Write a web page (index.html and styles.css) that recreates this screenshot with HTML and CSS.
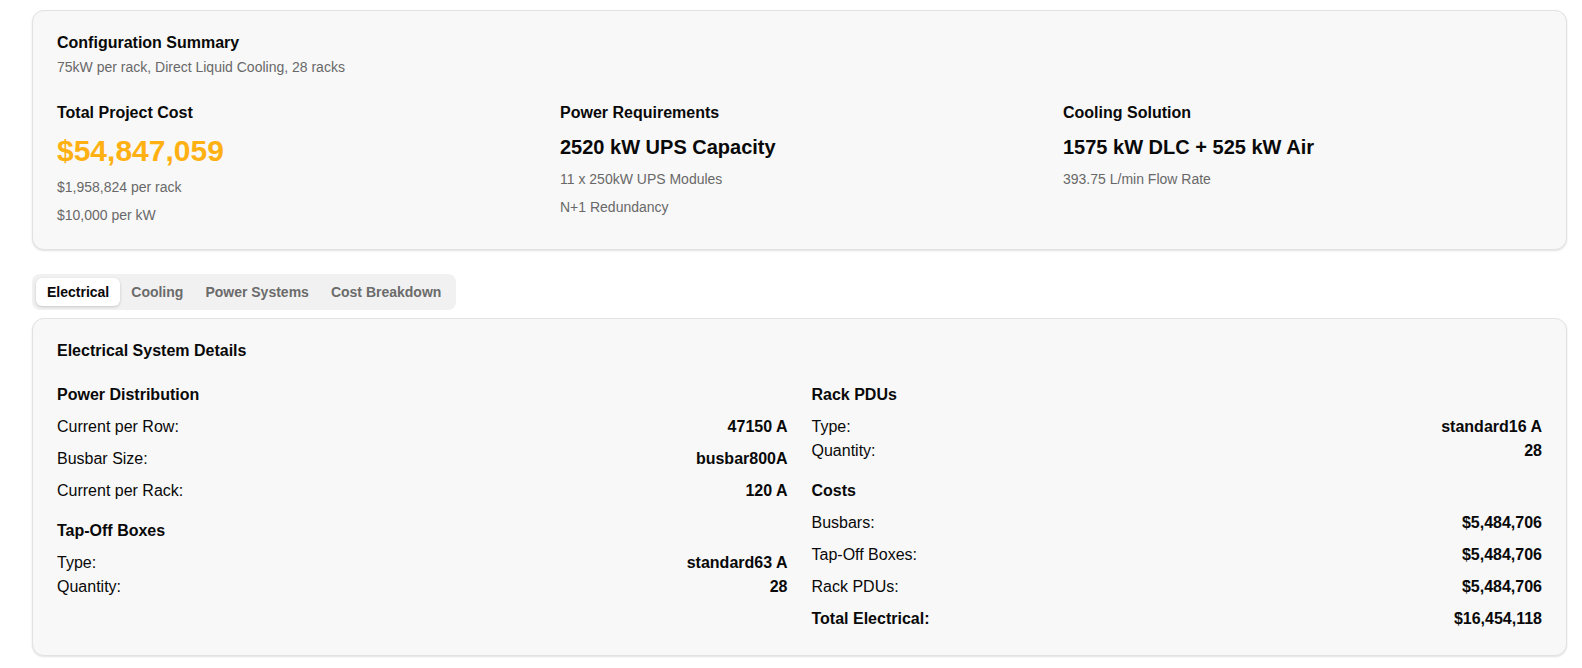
FILE: index.html
```html
<!DOCTYPE html>
<html lang="en">
<head>
  <meta charset="utf-8">
  <meta name="viewport" content="width=device-width, initial-scale=1">
  <title>Configuration Summary</title>
  <link rel="stylesheet" href="styles.css">
</head>
<body>
  <main class="page">
    <section class="card summary">
      <header class="card-header">
        <h2 class="card-title">Configuration Summary</h2>
        <p class="muted">75kW per rack, Direct Liquid Cooling, 28 racks</p>
      </header>
      <div class="summary-grid">
        <div class="stack">
          <h3 class="heading">Total Project Cost</h3>
          <p class="cost">$54,847,059</p>
          <p class="muted">$1,958,824 per rack</p>
          <p class="muted">$10,000 per kW</p>
        </div>
        <div class="stack">
          <h3 class="heading">Power Requirements</h3>
          <p class="figure">2520 kW UPS Capacity</p>
          <p class="muted">11 x 250kW UPS Modules</p>
          <p class="muted">N+1 Redundancy</p>
        </div>
        <div class="stack">
          <h3 class="heading">Cooling Solution</h3>
          <p class="figure">1575 kW DLC + 525 kW Air</p>
          <p class="muted">393.75 L/min Flow Rate</p>
        </div>
      </div>
    </section>

    <div class="tab-list" role="tablist" aria-label="System details">
      <button class="tab tab-active" id="tab-electrical" type="button" role="tab" aria-selected="true" aria-controls="panel-electrical">Electrical</button>
      <button class="tab" type="button" role="tab" aria-selected="false">Cooling</button>
      <button class="tab" type="button" role="tab" aria-selected="false">Power Systems</button>
      <button class="tab" type="button" role="tab" aria-selected="false">Cost Breakdown</button>
    </div>

    <section class="card" id="panel-electrical" role="tabpanel" aria-labelledby="tab-electrical">
      <header class="card-header">
        <h2 class="card-title">Electrical System Details</h2>
      </header>
      <div class="detail-grid">
        <div class="detail-column">
          <div class="stack">
            <h3 class="heading">Power Distribution</h3>
            <dl class="rows rows-spaced">
              <div class="row"><dt>Current per Row:</dt><dd>47150 A</dd></div>
              <div class="row"><dt>Busbar Size:</dt><dd>busbar800A</dd></div>
              <div class="row"><dt>Current per Rack:</dt><dd>120 A</dd></div>
            </dl>
          </div>
          <div class="stack">
            <h3 class="heading">Tap-Off Boxes</h3>
            <dl class="rows">
              <div class="row"><dt>Type:</dt><dd>standard63 A</dd></div>
              <div class="row"><dt>Quantity:</dt><dd>28</dd></div>
            </dl>
          </div>
        </div>
        <div class="detail-column">
          <div class="stack">
            <h3 class="heading">Rack PDUs</h3>
            <dl class="rows">
              <div class="row"><dt>Type:</dt><dd>standard16 A</dd></div>
              <div class="row"><dt>Quantity:</dt><dd>28</dd></div>
            </dl>
          </div>
          <div class="stack">
            <h3 class="heading">Costs</h3>
            <dl class="rows rows-spaced">
              <div class="row"><dt>Busbars:</dt><dd>$5,484,706</dd></div>
              <div class="row"><dt>Tap-Off Boxes:</dt><dd>$5,484,706</dd></div>
              <div class="row"><dt>Rack PDUs:</dt><dd>$5,484,706</dd></div>
              <div class="row row-total"><dt>Total Electrical:</dt><dd>$16,454,118</dd></div>
            </dl>
          </div>
        </div>
      </div>
    </section>
  </main>
</body>
</html>
```

FILE: styles.css
```css
* {
  box-sizing: border-box;
}

body {
  margin: 0;
  background: #ffffff;
  color: #090909;
  font-family: "Liberation Sans", Arial, sans-serif;
  font-size: 16px;
  line-height: 24px;
}

h2,
h3,
p,
dl,
dd {
  margin: 0;
}

.page {
  padding: 10px 15px 10px 32px;
}

.card {
  padding: 24px;
  border: 1px solid #e2e2e2;
  border-radius: 12px;
  background: #f8f8f8;
  box-shadow: 0 1px 2px rgba(0, 0, 0, 0.12);
}

.card-header {
  display: flex;
  flex-direction: column;
  gap: 6px;
  margin-bottom: 24px;
}

.card-title {
  font-size: 16px;
  font-weight: 700;
  line-height: 16px;
}

.muted {
  color: #686868;
  font-size: 14px;
  line-height: 20px;
}

.summary-grid {
  display: grid;
  grid-template-columns: repeat(3, 1fr);
  gap: 24px;
}

.stack {
  display: flex;
  flex-direction: column;
  gap: 8px;
}

.heading {
  font-size: 16px;
  font-weight: 700;
}

.cost {
  color: #ffb114;
  font-size: 30px;
  font-weight: 700;
  line-height: 36px;
}

.figure {
  font-size: 20px;
  font-weight: 700;
  line-height: 28px;
}

.tab-list {
  display: inline-flex;
  margin: 24px 0 8px;
  padding: 4px;
  border-radius: 8px;
  background: #f1f1f1;
  vertical-align: top;
}

.tab {
  padding: 4px 11px;
  border: 0;
  border-radius: 6px;
  background: transparent;
  color: #6b6b6b;
  font: inherit;
  font-size: 14px;
  font-weight: 700;
  line-height: 20px;
  cursor: pointer;
}

.tab-active {
  background: #ffffff;
  color: #090909;
  box-shadow: 0 1px 3px rgba(0, 0, 0, 0.18);
}

.detail-grid {
  display: grid;
  grid-template-columns: repeat(2, 1fr);
  gap: 24px;
}

.detail-column {
  display: flex;
  flex-direction: column;
  gap: 16px;
}

.rows {
  display: flex;
  flex-direction: column;
}

.rows-spaced {
  gap: 8px;
}

.row {
  display: flex;
  justify-content: space-between;
}

.row dd,
.row-total {
  font-weight: 700;
}
```
